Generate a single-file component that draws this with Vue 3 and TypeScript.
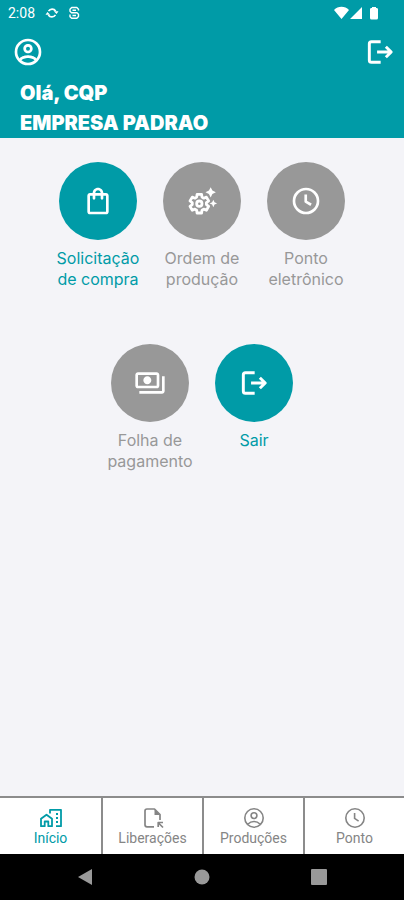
<script setup lang="ts">
interface Icon {
  fill?: string
  line?: string
  width?: number
}

interface Action {
  label: string
  icon: string
  active: boolean
}

interface Tab {
  label: string
  icon: string
  current: boolean
}

const icons: Record<string, Icon> = {
  account: {
    fill: 'M12 2A10 10 0 0 0 2 12A10 10 0 0 0 12 22A10 10 0 0 0 22 12A10 10 0 0 0 12 2M7.07 18.28C7.5 17.38 10.12 16.5 12 16.5C13.88 16.5 16.5 17.38 16.93 18.28C15.57 19.36 13.86 20 12 20C10.14 20 8.43 19.36 7.07 18.28M18.36 16.83C16.93 15.09 13.46 14.5 12 14.5C10.54 14.5 7.07 15.09 5.64 16.83C4.62 15.5 4 13.82 4 12C4 7.59 7.59 4 12 4C16.41 4 20 7.59 20 12C20 13.82 19.38 15.5 18.36 16.83M12 6C10.06 6 8.5 7.56 8.5 9.5C8.5 11.44 10.06 13 12 13C13.94 13 15.5 11.44 15.5 9.5C15.5 7.56 13.94 6 12 6M12 11A1.5 1.5 0 0 1 10.5 9.5A1.5 1.5 0 0 1 12 8A1.5 1.5 0 0 1 13.5 9.5A1.5 1.5 0 0 1 12 11Z',
  },
  accountThin: {
    line: 'M12 2.8a9.2 9.2 0 1 0 0 18.4a9.2 9.2 0 1 0 0-18.4M12 6.7a2.9 2.9 0 1 0 0 5.8a2.9 2.9 0 1 0 0-5.8M5.8 18.2c2-2 4-2.7 6.2-2.7s4.2.7 6.2 2.7',
    width: 1.6,
  },
  logout: {
    line: 'M12.5 4.3H5.6a1.6 1.6 0 0 0-1.6 1.6v12.2a1.6 1.6 0 0 0 1.6 1.6h6.9M9.8 12h9.6M16.4 8l4 4-4 4',
    width: 2.2,
  },
  bag: {
    fill: 'M18 6h-2c0-2.21-1.79-4-4-4S8 3.79 8 6H6c-1.1 0-2 .9-2 2v12c0 1.1.9 2 2 2h12c1.1 0 2-.9 2-2V8c0-1.1-.9-2-2-2zm-6-2c1.1 0 2 .9 2 2h-4c0-1.1.9-2 2-2zm6 16H6V8h2v2c0 .55.45 1 1 1s1-.45 1-1V8h4v2c0 .55.45 1 1 1s1-.45 1-1V8h2v12z',
  },
  gear: {
    fill: 'M17.2 6.8L14.6 5.5l2.6-1.3L18.5 1.600l1.300 2.600L22.400 5.500l-2.600 1.300L18.500 9.400zM21.400 12.900L20.500 11l-.9 1.900-1.900.9 1.900.9.9 1.900.9-1.900 1.900-.9z',
    line: 'M15.300 14.700l1.700 1.300-1.700 2.900-2-.8-1.300.8-.3 2.100H8.300L8 18.900l-1.300-.8-2 .8L3 16l1.700-1.300v-1.400L3 12l1.700-2.900 2 .8L8 9.100 8.300 7h3.400l.3 2.100 1.300.8 2-.8L17 12l-1.700 1.300zM10 12a2 2 0 1 0 0 4a2 2 0 1 0 0-4',
    width: 2.1,
  },
  clock: {
    line: 'M12 3a9 9 0 1 0 0 18a9 9 0 1 0 0-18M11.800 7.200v5.200l4 2.400',
    width: 2,
  },
  clockThin: {
    line: 'M12 2.800a9.200 9.200 0 1 0 0 18.400a9.200 9.200 0 1 0 0-18.400M11.600 7v5.400l4 2.700',
    width: 1.6,
  },
  money: {
    fill: 'M19 14V6c0-1.1-.9-2-2-2H3c-1.1 0-2 .9-2 2v8c0 1.1.9 2 2 2h14c1.1 0 2-.9 2-2zm-2 0H3V6h14v8zm-7-7c-1.66 0-3 1.34-3 3s1.34 3 3 3 3-1.34 3-3-1.34-3-3-3zm13 0v11c0 1.1-.9 2-2 2H4v-2h17V7h2z',
  },
  home: {
    line: 'M2 20.200v-7.400L7.500 8.700l5.500 4.100v7.400H9.300v-4.700H5.700v4.700zM11 7.500V3.800h11v16.400h-5',
    width: 1.8,
    fill: 'M17 7h2v2h-2zM17 11h2v2h-2zM17 15h2v2h-2z',
  },
  file: {
    line: 'M13 20.800H6a2 2 0 0 1-2-2V5a2 2 0 0 1 2-2h7.500l5.500 5.500V14M22 21.500l-4.500-4.500M17.200 21v-4.500H22',
    width: 1.7,
    fill: 'M13.500 3v6H19z',
  },
}

const actions: Action[] = [
  { label: 'Solicitação de compra', icon: 'bag', active: true },
  { label: 'Ordem de produção', icon: 'gear', active: false },
  { label: 'Ponto eletrônico', icon: 'clock', active: false },
  { label: 'Folha de pagamento', icon: 'money', active: false },
  { label: 'Sair', icon: 'logout', active: true },
]

const tabs: Tab[] = [
  { label: 'Início', icon: 'home', current: true },
  { label: 'Liberações', icon: 'file', current: false },
  { label: 'Produções', icon: 'accountThin', current: false },
  { label: 'Ponto', icon: 'clockThin', current: false },
]
</script>

<template>
  <div class="screen">
    <header class="header">
      <div class="status">
        <span class="time">2:08</span>
        <svg class="status-icon" viewBox="0 0 14 14" aria-hidden="true">
          <path class="stroke" stroke-width="1.6" d="M3.5 5.2A4.3 4.3 0 0 1 10.7 5M10.5 8.8A4.3 4.3 0 0 1 3.3 9" />
          <path class="solid" d="M8.8 5.2h4.700L11.600 8zM.5 8.800h4.700L2.400 6z" />
        </svg>
        <svg class="status-icon" viewBox="0 0 14 14" aria-hidden="true">
          <path class="stroke" stroke-width="1.4" d="M11.500 4.500V3.300L9.800 1.500H4.700L3 3.300v2l1.500 1.500h5.500l1.500 1.500v2.200l-1.700 1.800H4.700L3 10.700V8.500M5.500 4.300h3.500M5.500 9.500h3.500" />
        </svg>
        <svg class="signals" viewBox="0 0 44 14" aria-hidden="true">
          <path class="solid" d="M0 4C4-.2 11-.2 15 4L7.500 13zM28 1v12H16zM37 2h1V1h4v1h1a1.500 1.500 0 0 1 1 1.500V12a1.500 1.500 0 0 1-1.500 1.500h-5A1.500 1.500 0 0 1 36 12V3.500A1.500 1.500 0 0 1 37 2z" />
        </svg>
      </div>
      <div class="toolbar">
        <button class="tool" type="button" aria-label="Perfil">
          <svg class="tool-icon" viewBox="0 0 24 24" aria-hidden="true">
            <path class="solid" :d="icons.account.fill" />
          </svg>
        </button>
        <button class="tool" type="button" aria-label="Sair">
          <svg class="tool-icon" viewBox="0 0 24 24" aria-hidden="true">
            <path class="stroke" :d="icons.logout.line" :stroke-width="icons.logout.width" />
          </svg>
        </button>
      </div>
      <h1 class="greeting">Olá, CQP<br />EMPRESA PADRAO</h1>
    </header>

    <main class="actions">
      <button
        v-for="action in actions"
        :key="action.label"
        type="button"
        class="action"
        :class="{ active: action.active }"
      >
        <span class="disc">
          <svg class="disc-icon" viewBox="0 0 24 24" aria-hidden="true">
            <path v-if="icons[action.icon].fill" class="solid" :d="icons[action.icon].fill" />
            <path
              v-if="icons[action.icon].line"
              class="stroke"
              :d="icons[action.icon].line"
              :stroke-width="icons[action.icon].width"
            />
          </svg>
        </span>
        <span class="action-label">{{ action.label }}</span>
      </button>
    </main>

    <nav class="tabs">
      <a
        v-for="tab in tabs"
        :key="tab.label"
        href="#"
        class="tab"
        :class="{ current: tab.current }"
        :aria-current="tab.current ? 'page' : undefined"
      >
        <svg class="tab-icon" viewBox="0 0 24 24" aria-hidden="true">
          <path v-if="icons[tab.icon].fill" class="solid" :d="icons[tab.icon].fill" />
          <path
            v-if="icons[tab.icon].line"
            class="stroke"
            :d="icons[tab.icon].line"
            :stroke-width="icons[tab.icon].width"
          />
        </svg>
        <span>{{ tab.label }}</span>
      </a>
    </nav>

    <div class="system">
      <button class="system-key" type="button" aria-label="Voltar">
        <svg class="system-icon" viewBox="0 0 16 16" aria-hidden="true"><path class="solid" d="M15 0v16L1 8z" /></svg>
      </button>
      <button class="system-key" type="button" aria-label="Tela inicial">
        <svg class="system-icon" viewBox="0 0 16 16" aria-hidden="true"><circle class="solid" cx="8" cy="8" r="7.5" /></svg>
      </button>
      <button class="system-key" type="button" aria-label="Recentes">
        <svg class="system-icon" viewBox="0 0 16 16" aria-hidden="true"><rect class="solid" width="16" height="16" rx="1" /></svg>
      </button>
    </div>
  </div>
</template>

<style>
body {
  margin: 0;
}
</style>

<style scoped>
.screen {
  display: flex;
  flex-direction: column;
  min-height: 100vh;
  background: #f4f4f8;
  font-family: Inter, "Liberation Sans", sans-serif;
}

button {
  padding: 0;
  border: 0;
  background: none;
  color: inherit;
  font: inherit;
  cursor: pointer;
}

svg {
  display: block;
}

.solid {
  fill: currentColor;
}

.stroke {
  fill: none;
  stroke: currentColor;
  stroke-linejoin: round;
}

.header {
  background: #009ba7;
  color: #fff;
}

.status {
  display: flex;
  align-items: center;
  gap: 8px;
  height: 26px;
  padding: 0 26px 0 8px;
  font-family: Roboto, sans-serif;
  font-size: 14px;
}

.status-icon {
  width: 14px;
  height: 14px;
}

.time {
  margin-right: 2px;
}

.signals {
  width: 44px;
  height: 14px;
  margin-left: auto;
}

.toolbar {
  display: flex;
  justify-content: space-between;
  padding: 10px 8px 10px 12px;
}

.tool-icon {
  width: 32px;
  height: 32px;
}

.greeting {
  margin: 0;
  padding: 0 20px;
  font-size: 20px;
  font-weight: 900;
  line-height: 30px;
}

.actions {
  display: flex;
  flex: 1;
  flex-wrap: wrap;
  justify-content: center;
  align-content: flex-start;
  align-items: flex-start;
  row-gap: 54px;
  padding: 24px 0;
}

.action {
  display: flex;
  flex-direction: column;
  align-items: center;
  gap: 8px;
  width: 104px;
  color: #989898;
}

.active {
  color: #009ba7;
}

.disc {
  display: flex;
  align-items: center;
  justify-content: center;
  width: 78px;
  height: 78px;
  border-radius: 50%;
  background: currentColor;
}

.disc-icon {
  width: 32px;
  height: 32px;
  color: #fff;
}

.action-label {
  max-width: 92px;
  font-size: 16px;
  line-height: 21px;
}

.tabs {
  display: grid;
  grid-template-columns: repeat(4, 1fr);
  border-top: 2px solid #8c8c8c;
  background: #fff;
}

.tab {
  display: flex;
  flex-direction: column;
  align-items: center;
  height: 56px;
  box-sizing: border-box;
  padding-top: 8px;
  color: #858585;
  font-family: Roboto, sans-serif;
  font-size: 14px;
  line-height: 16px;
  text-decoration: none;
}

.tab + .tab {
  border-left: 2px solid #8c8c8c;
}

.current {
  color: #009ba7;
}

.tab-icon {
  width: 24px;
  height: 24px;
}

.system {
  display: flex;
  align-items: center;
  justify-content: center;
  gap: 101px;
  height: 46px;
  background: #000;
  color: #999;
}

.system-icon {
  width: 16px;
  height: 16px;
}
</style>
